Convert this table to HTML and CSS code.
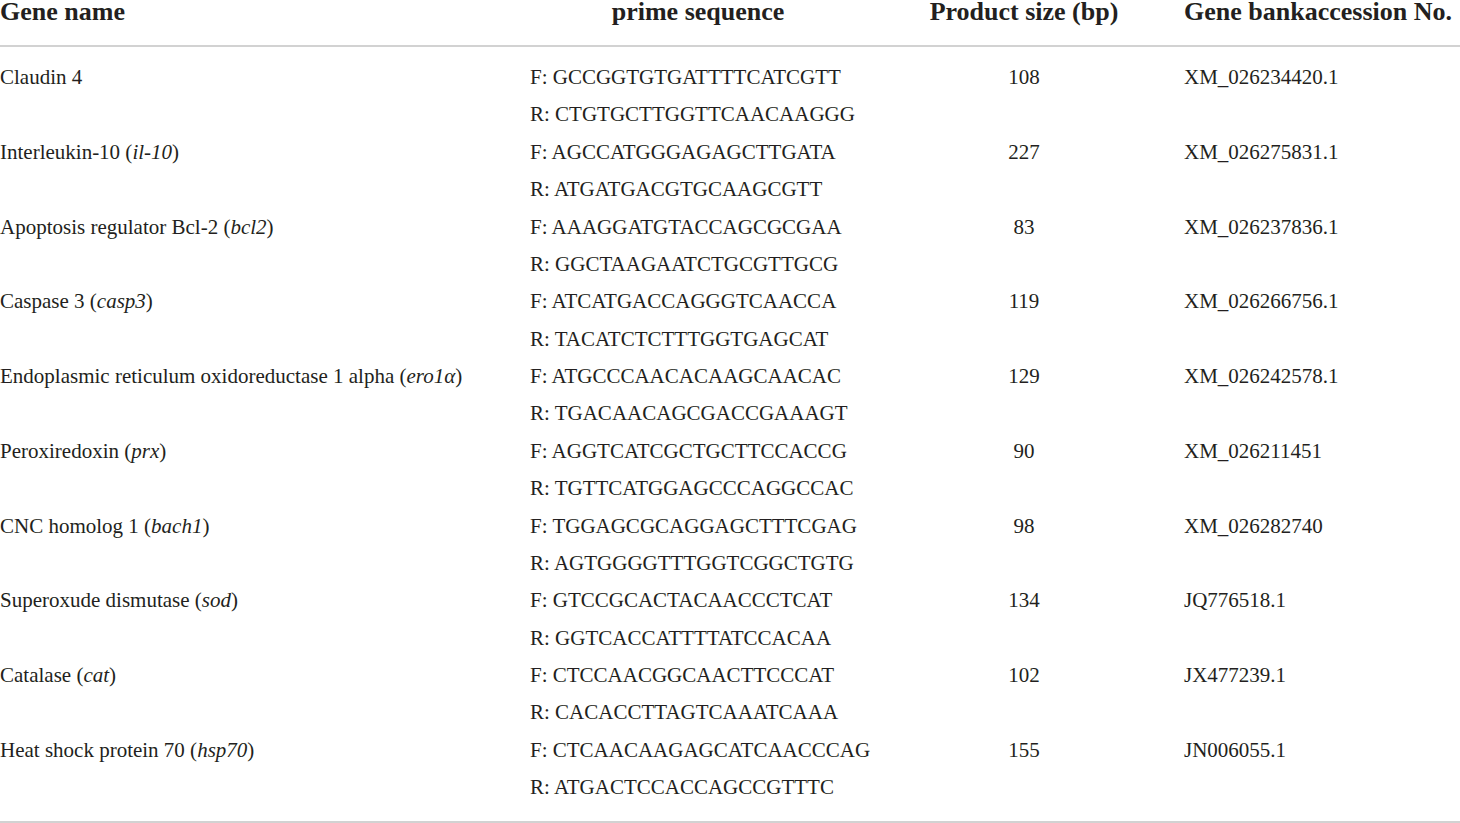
FILE: index.html
```html
<!DOCTYPE html>
<html>
<head>
<meta charset="utf-8">
<link rel="stylesheet" href="styles.css">
</head>
<body>
<table class="primers">
  <colgroup>
    <col class="c-name"><col class="c-seq"><col class="c-size"><col class="c-acc">
  </colgroup>
  <thead>
    <tr>
      <th class="h-name">Gene name</th>
      <th class="h-seq">prime sequence</th>
      <th class="h-size">Product size (bp)</th>
      <th class="h-acc">Gene bankaccession No.</th>
    </tr>
  </thead>
  <tbody>
    <tr class="first">
      <td>Claudin 4</td>
      <td class="seq"><div>F: GCCGGTGTGATTTTCATCGTT</div><div>R: CTGTGCTTGGTTCAACAAGGG</div></td>
      <td class="size">108</td>
      <td class="acc">XM_026234420.1</td>
    </tr>
    <tr>
      <td>Interleukin-10 (<i>il-10</i>)</td>
      <td class="seq"><div>F: AGCCATGGGAGAGCTTGATA</div><div>R: ATGATGACGTGCAAGCGTT</div></td>
      <td class="size">227</td>
      <td class="acc">XM_026275831.1</td>
    </tr>
    <tr>
      <td>Apoptosis regulator Bcl-2 (<i>bcl2</i>)</td>
      <td class="seq"><div>F: AAAGGATGTACCAGCGCGAA</div><div>R: GGCTAAGAATCTGCGTTGCG</div></td>
      <td class="size">83</td>
      <td class="acc">XM_026237836.1</td>
    </tr>
    <tr>
      <td>Caspase 3 (<i>casp3</i>)</td>
      <td class="seq"><div>F: ATCATGACCAGGGTCAACCA</div><div>R: TACATCTCTTTGGTGAGCAT</div></td>
      <td class="size">119</td>
      <td class="acc">XM_026266756.1</td>
    </tr>
    <tr>
      <td>Endoplasmic reticulum oxidoreductase 1 alpha (<i>ero1α</i>)</td>
      <td class="seq"><div>F: ATGCCCAACACAAGCAACAC</div><div>R: TGACAACAGCGACCGAAAGT</div></td>
      <td class="size">129</td>
      <td class="acc">XM_026242578.1</td>
    </tr>
    <tr>
      <td>Peroxiredoxin (<i>prx</i>)</td>
      <td class="seq"><div>F: AGGTCATCGCTGCTTCCACCG</div><div>R: TGTTCATGGAGCCCAGGCCAC</div></td>
      <td class="size">90</td>
      <td class="acc">XM_026211451</td>
    </tr>
    <tr>
      <td>CNC homolog 1 (<i>bach1</i>)</td>
      <td class="seq"><div>F: TGGAGCGCAGGAGCTTTCGAG</div><div>R: AGTGGGGTTTGGTCGGCTGTG</div></td>
      <td class="size">98</td>
      <td class="acc">XM_026282740</td>
    </tr>
    <tr>
      <td>Superoxude dismutase (<i>sod</i>)</td>
      <td class="seq"><div>F: GTCCGCACTACAACCCTCAT</div><div>R: GGTCACCATTTTATCCACAA</div></td>
      <td class="size">134</td>
      <td class="acc">JQ776518.1</td>
    </tr>
    <tr>
      <td>Catalase (<i>cat</i>)</td>
      <td class="seq"><div>F: CTCCAACGGCAACTTCCCAT</div><div>R: CACACCTTAGTCAAATCAAA</div></td>
      <td class="size">102</td>
      <td class="acc">JX477239.1</td>
    </tr>
    <tr class="last">
      <td>Heat shock protein 70 (<i>hsp70</i>)</td>
      <td class="seq"><div>F: CTCAACAAGAGCATCAACCCAG</div><div>R: ATGACTCCACCAGCCGTTTC</div></td>
      <td class="size">155</td>
      <td class="acc">JN006055.1</td>
    </tr>
  </tbody>
</table>
</body>
</html>
```

FILE: styles.css
```css
html, body {
  margin: 0;
  padding: 0;
  background: #ffffff;
}

body {
  font-family: "Liberation Serif", "Times New Roman", serif;
  color: #231f20;
  width: 1460px;
  height: 823px;
  overflow: hidden;
}

.primers {
  border-collapse: collapse;
  table-layout: fixed;
  width: 1460px;
  border-bottom: 2px solid #d2d2d2;
}

.c-name { width: 530px; }
.c-seq { width: 336px; }
.c-size { width: 316px; }
.c-acc { width: 278px; }

.primers th {
  font-size: 26px;
  font-weight: bold;
  line-height: 24px;
  padding: 0 0 21px 0;
  border-bottom: 2px solid #d2d2d2;
  white-space: nowrap;
  vertical-align: top;
}

.h-name { text-align: left; }
.h-seq { text-align: center; }
.h-size { text-align: center; }
.primers th.h-acc { text-align: left; padding-left: 2px; }

.primers td {
  font-size: 21px;
  line-height: 37.37px;
  padding: 0;
  vertical-align: top;
  white-space: nowrap;
}

.primers tr.first td { padding-top: 12px; }
.primers tr.last td { padding-bottom: 14px; }

.primers td.size { text-align: center; }
.primers td.acc { padding-left: 2px; }

.primers i { font-style: italic; }
```
